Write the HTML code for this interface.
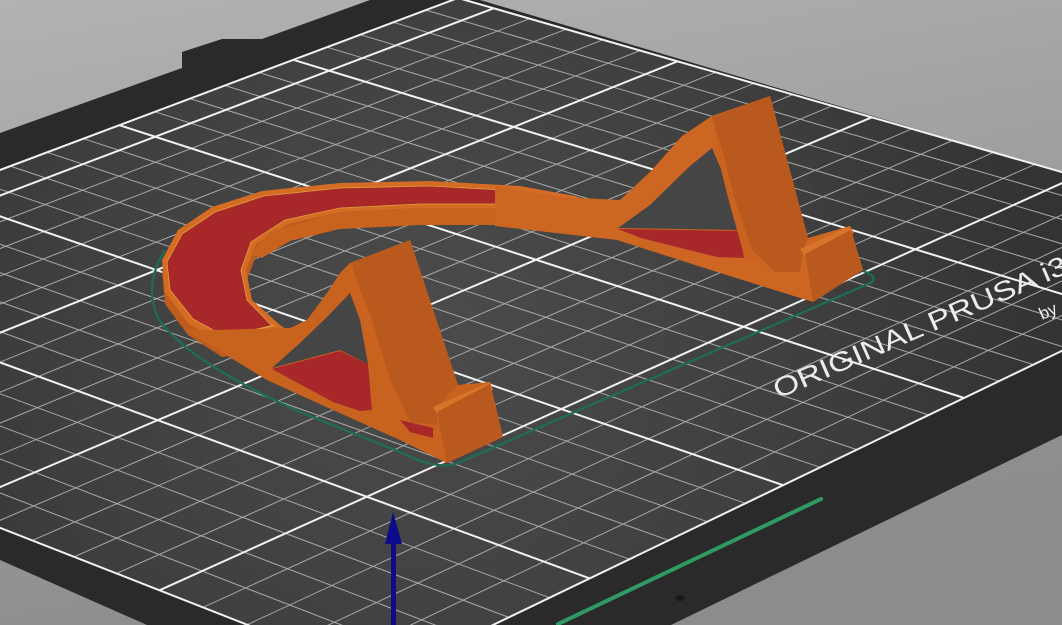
<!DOCTYPE html>
<html><head><meta charset="utf-8">
<style>
html,body{margin:0;padding:0;width:1062px;height:625px;overflow:hidden;background:#a0a0a0}
svg{display:block}
</style></head>
<body>
<svg id="s" width="1062" height="625" viewBox="0 0 1062 625" xmlns="http://www.w3.org/2000/svg">
<defs>
<linearGradient id="bg" x1="0" y1="0" x2="0.3" y2="1">
<stop offset="0" stop-color="#b2b2b2"/><stop offset="1" stop-color="#8c8c8c"/>
</linearGradient>
<radialGradient id="surf" cx="430" cy="330" r="620" gradientUnits="userSpaceOnUse">
<stop offset="0" stop-color="#4b4b4b"/><stop offset="0.6" stop-color="#3f3f3f"/><stop offset="1" stop-color="#333"/>
</radialGradient>
</defs>
<rect width="1062" height="625" fill="url(#bg)"/>
<polygon points="0,133 182,68 182,52 222,39 262,39 370,0 480,0 1062,172 1062,435 671,625 147,625 0,560" fill="#2a2a2a"/>
<polygon id="quad" fill="url(#surf)" points=""/>
<g id="grid"></g>
<line x1="558" y1="624" x2="821" y2="499" stroke="#2f9a63" stroke-width="4" stroke-linecap="round"/>
<ellipse cx="680" cy="598" rx="5" ry="3" fill="#1a1a1a"/>
<g transform="translate(778,399) rotate(-23.5)"><text x="0" y="0" font-family="Liberation Sans, sans-serif" font-size="27" fill="#ececec" textLength="318" lengthAdjust="spacingAndGlyphs">ORIGINAL PRUSA i3</text></g>
<g transform="translate(1042,320) rotate(-23.5)"><text x="0" y="0" font-family="Liberation Sans, sans-serif" font-size="17" fill="#ececec">by</text></g>

<!-- skirt -->
<path d="M165,250 Q143,285 158,318 Q185,360 300,412 L400,452 Q437,471 458,463 L870,283 Q880,277 863,271" fill="none" stroke="#1d6e56" stroke-width="2.2"/>

<!-- band outer wall -->
<polygon transform="translate(0,12)" fill="#bd5c1c" points="222,345 188,323 165,292 162,260 178,230 212,207 262,191 340,183 430,181 520,186 575,196 600,205 590,212 560,210 500,208 420,208 340,212 288,224 256,244 246,270 252,300 280,325 295,335"/>
<!-- band top -->
<polygon fill="#d46c24" points="222,345 188,323 165,292 162,260 178,230 212,207 262,191 340,183 430,181 520,186 575,196 600,205 590,212 560,210 500,208 420,208 340,212 288,224 256,244 246,270 252,300 280,325 295,335"/>
<!-- inner wall -->
<polygon fill="#c8621f" points="250,255 270,232 340,212 420,208 500,208 560,210 590,212 590,229 500,225 420,225 340,229 290,241 262,258"/>
<!-- red band -->
<polygon fill="#a8282a" stroke="#e0a040" stroke-width="0.8" points="228,338 193,319 170,290 167,262 182,234 215,212 264,196 340,188 430,186 520,191 555,198 550,204 500,204 420,204 340,208 285,220 251,242 241,270 247,300 272,326"/>
<g stroke="#e8b050" stroke-width="0.8">
<line x1="226" y1="336" x2="275" y2="325"/><line x1="228" y1="340" x2="280" y2="329"/><line x1="230" y1="343" x2="286" y2="333"/>
<line x1="545" y1="198" x2="585" y2="202"/><line x1="548" y1="202" x2="590" y2="206"/>
</g>

<!-- RIGHT GROUP -->
<polygon fill="#cc6622" points="495,186 560,197 620,200 652,170 682,136 712,116 770,96 808,238 850,226 863,270 813,302 717,272 617,240 495,226"/>
<polygon fill="#454545" points="712,148 690,166 650,205 618,228 740,230 730,190"/>
<polygon fill="#a8282a" points="618,229 740,231 744,258 717,257 641,238"/>
<polygon fill="#b9591d" points="712,117 770,96 808,238 803,250 800,272 775,272 752,250 735,200 722,150"/>
<polygon fill="#c9631f" points="712,117 722,150 735,200 752,250 760,262 745,258 730,205 716,150"/>
<polygon fill="#d8732a" points="800,249 850,226 854,233 805,256"/>
<polygon fill="#b9591d" points="805,254 851,230 863,270 813,302"/>

<!-- LEFT GROUP -->
<polygon fill="#c8621f" points="185,330 213,330 290,328 307,320 327,293 340,273 350,263 410,240 458,385 490,382 503,437 447,463 400,440 333,410 267,380 213,347"/>
<polygon fill="#454545" points="350,293 327,317 300,343 272,368 340,350 368,364 360,320"/>
<polygon fill="#a8282a" points="272,369 340,351 368,364 372,410 360,411 333,402"/>
<polygon fill="#b9591d" points="352,263 410,240 458,385 450,392 437,408 437,425 410,422 390,380 372,320 358,285"/>
<polygon fill="#c9631f" points="350,263 358,285 372,320 390,380 410,422 400,420 382,382 365,322 352,290"/>
<polygon fill="#a8282a" points="400,420 433,428 433,438 410,432"/>
<polygon fill="#d8732a" points="433,407 490,382 493,390 437,414"/>
<polygon fill="#b9591d" points="437,412 490,384 503,437 447,463"/>

<!-- Z arrow -->
<rect x="391" y="540" width="5" height="85" fill="#0b0b8c"/>
<polygon points="385,544 402,544 393,512" fill="#0b0b8c"/>
</svg>
<script>
(function(){
var src=[[0,0],[250,0],[250,210],[0,210]];
var dst=[[383,678],[1294,239],[458,-2],[-466,345]];
var A=[],b=[];
for(var i=0;i<4;i++){var x=src[i][0],y=src[i][1],u=dst[i][0],v=dst[i][1];
A.push([x,y,1,0,0,0,-u*x,-u*y]);b.push(u);
A.push([0,0,0,x,y,1,-v*x,-v*y]);b.push(v);}
var n=8;
for(var c=0;c<n;c++){var p=c;for(var r=c+1;r<n;r++)if(Math.abs(A[r][c])>Math.abs(A[p][c]))p=r;
var t=A[c];A[c]=A[p];A[p]=t;t=b[c];b[c]=b[p];b[p]=t;
for(var r=0;r<n;r++){if(r==c)continue;var f=A[r][c]/A[c][c];for(var k=c;k<n;k++)A[r][k]-=f*A[c][k];b[r]-=f*b[c];}}
var h=[];for(var i=0;i<n;i++)h.push(b[i]/A[i][i]);
function m(x,y){var w=h[6]*x+h[7]*y+1;return[(h[0]*x+h[1]*y+h[2])/w,(h[3]*x+h[4]*y+h[5])/w];}
var q=[m(0,0),m(250,0),m(250,210),m(0,210)];
document.getElementById('quad').setAttribute('points',q.map(function(p){return p[0].toFixed(1)+','+p[1].toFixed(1)}).join(' '));
var g=document.getElementById('grid'),NS='http://www.w3.org/2000/svg',minor=[],major=[];
function ln(a,bb,maj){var l=document.createElementNS(NS,'line');
l.setAttribute('x1',a[0].toFixed(1));l.setAttribute('y1',a[1].toFixed(1));
l.setAttribute('x2',bb[0].toFixed(1));l.setAttribute('y2',bb[1].toFixed(1));
l.setAttribute('stroke',maj?'#f2f2f2':'#a9a9a9');l.setAttribute('stroke-width',maj?'2':'1');
(maj?major:minor).push(l);}
for(var x=0;x<=250;x+=10){ln(m(x,0),m(x,210),x%50==0);}
for(var y=0;y<=210;y+=10){ln(m(0,y),m(250,y),(y%50==0)||y==210);}
minor.concat(major).forEach(function(l){g.appendChild(l);});
})();
</script>
</body></html>
